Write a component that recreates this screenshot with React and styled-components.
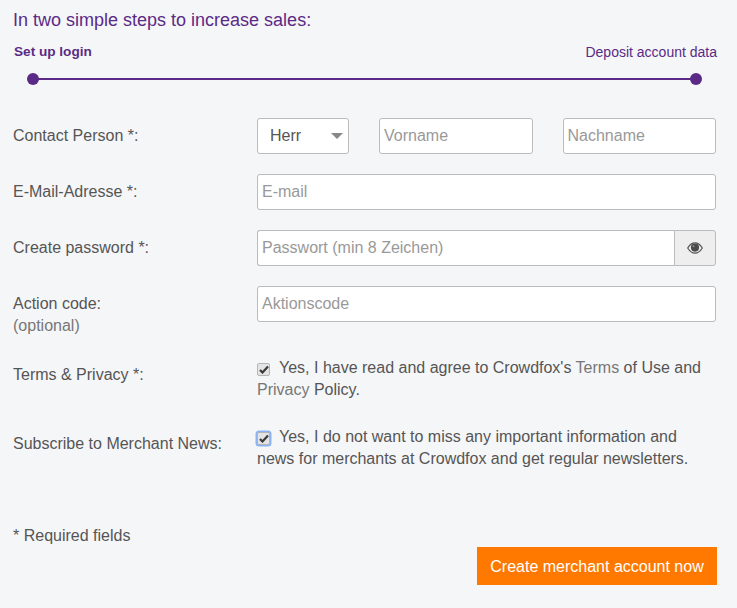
import React from "react";
import styled, {createGlobalStyle} from "styled-components";

const GlobalStyle = createGlobalStyle`
  html, body {
    margin: 0;
    background: #f5f6f8;
    font-family: "Liberation Sans", Arial, sans-serif;
    color: #555;
  }
`

const Page = styled.div`
  width: 737px;
  height: 608px;
  box-sizing: border-box;
  padding: 10px 21px 0 13px;
  overflow: hidden;
`

const Heading = styled.h2`
  margin: 0;
  font-size: 18px;
  line-height: 21px;
  font-weight: 400;
  color: #5b2a86;
`

const Steps = styled.div`
  display: flex;
  justify-content: space-between;
  margin: 12px -1px 0 0;
  font-size: 14px;
  line-height: 18px;
  color: #5b2a86;
`

const StepName = styled.span`
  font-weight: ${p => (p.$active ? 700 : 400)};
  ${p => p.$active && "font-size: 13.6px; padding-left: 1px;"}
`

const Track = styled.div`
  position: relative;
  height: 2px;
  background: #5b2a86;
  margin: 17px 20px 38px 20px;
`

const Dot = styled.span`
  position: absolute;
  top: -5px;
  ${p => (p.$end ? "right: -6px;" : "left: -6px;")}
  width: 12px;
  height: 12px;
  border-radius: 50%;
  background: #5b2a86;
`

const Form = styled.form`
  display: grid;
  grid-template-columns: 244px minmax(0, 1fr);
  row-gap: 20px;
  font-size: 16px;
  line-height: 22px;
`

const Label = styled.label`
  display: block;
  padding-top: 7px;
`

const Hint = styled.span`
  display: block;
  color: #777;
`

const Fields = styled.div`
  display: flex;
  gap: 30px;
`

const Input = styled.input`
  flex: 1;
  min-width: 0;
  height: 36px;
  box-sizing: border-box;
  padding: 0 4px;
  border: 1px solid #bbb;
  border-radius: 3px;
  background: #fff;
  font: inherit;
  color: #555;
  outline: none;

  &::placeholder {
    color: #999;
    opacity: 1;
  }
`

const SelectBox = styled.div`
  position: relative;
  flex: 0 0 92px;
  height: 36px;
  box-sizing: border-box;
  padding-left: 12px;
  border: 1px solid #bbb;
  border-radius: 3px;
  background: #fff;
  line-height: 33px;

  &::after {
    content: "";
    position: absolute;
    right: 5px;
    top: 14px;
    border-left: 6px solid transparent;
    border-right: 6px solid transparent;
    border-top: 6px solid #888;
  }
`

const InputGroup = styled.div`
  display: flex;
`

const GroupInput = styled(Input)`
  border-radius: 3px 0 0 3px;
  border-right: 0;
`

const Addon = styled.button`
  flex: 0 0 42px;
  height: 36px;
  padding: 0;
  display: flex;
  align-items: center;
  justify-content: center;
  border: 1px solid #bbb;
  border-radius: 0 3px 3px 0;
  background: #eee;
`

const Consent = styled.div`
  font-size: 16px;
  line-height: 22px;
  padding-bottom: ${p => p.$gap || 0}px;
`

const Check = styled.span`
  display: inline-flex;
  align-items: center;
  justify-content: center;
  width: 13px;
  height: 13px;
  box-sizing: border-box;
  margin-right: 9px;
  vertical-align: -1px;
  border: 1px solid #b5b5b5;
  border-radius: 2px;
  background: #e4e4e4;
  box-shadow: ${p => (p.$focus ? "0 0 0 1.5px #8cb4f5" : "none")};
`

const Link = styled.a`
  color: #777;
`

const Footer = styled.div`
  display: flex;
  justify-content: space-between;
  align-items: flex-start;
  margin: 55px -1px 0 0;
`

const Required = styled.span`
  font-size: 16px;
  line-height: 22px;
`

const Submit = styled.button`
  margin-top: 22px;
  width: 240px;
  height: 38px;
  padding: 2px 0 0;
  border: 0;
  background: #ff7900;
  color: #fff;
  font: inherit;
  font-size: 16px;
`

const Tick = () => (
    <svg width="10" height="9" viewBox="0 0 10 9">
        <path d="M1 5 L3.5 7.5 L9 1.5" fill="none" stroke="#3a3a3a" strokeWidth="2.2"/>
    </svg>
)

const EyeIcon = () => (
    <svg width="16" height="12" viewBox="0 0 16 12">
        <path d="M.7 6 C3 2.2 5.4 .8 8 .8 S13 2.2 15.3 6 C13 9.8 10.6 11.2 8 11.2 S3 9.8 .7 6 Z"
              fill="#eee" stroke="#555" strokeWidth="1.2"/>
        <circle cx="8" cy="5.6" r="4.1" fill="#4a4a4a"/>
        <circle cx="6.5" cy="4.2" r="1" fill="#8a8a8a"/>
    </svg>
)

const App = () => {
    return (
        <>
            <GlobalStyle/>
            <Page>
                <Heading>In two simple steps to increase sales:</Heading>
                <Steps>
                    <StepName $active>Set up login</StepName>
                    <StepName>Deposit account data</StepName>
                </Steps>
                <Track>
                    <Dot/>
                    <Dot $end/>
                </Track>
                <Form>
                    <Label>Contact Person *:</Label>
                    <Fields>
                        <SelectBox>Herr</SelectBox>
                        <Input placeholder="Vorname"/>
                        <Input placeholder="Nachname"/>
                    </Fields>

                    <Label>E-Mail-Adresse *:</Label>
                    <Input placeholder="E-mail"/>

                    <Label>Create password *:</Label>
                    <InputGroup>
                        <GroupInput placeholder="Passwort (min 8 Zeichen)"/>
                        <Addon type="button"><EyeIcon/></Addon>
                    </InputGroup>

                    <Label>Action code:<Hint>(optional)</Hint></Label>
                    <Input placeholder="Aktionscode"/>

                    <Label>Terms &amp; Privacy *:</Label>
                    <Consent $gap={5}>
                        <Check><Tick/></Check>
                        Yes, I have read and agree to Crowdfox's <Link>Terms</Link> of Use and <Link>Privacy</Link> Policy.
                    </Consent>

                    <Label>Subscribe to Merchant News:</Label>
                    <Consent>
                        <Check $focus><Tick/></Check>
                        Yes, I do not want to miss any important information and news for merchants at Crowdfox and get regular newsletters.
                    </Consent>
                </Form>
                <Footer>
                    <Required>* Required fields</Required>
                    <Submit type="button">Create merchant account now</Submit>
                </Footer>
            </Page>
        </>
    )
}

export default App;
